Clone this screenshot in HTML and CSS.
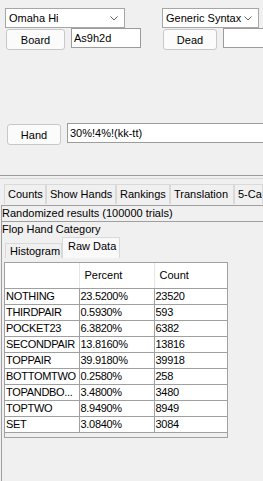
FILE: index.html
```html
<!DOCTYPE html>
<html lang="en">
<head>
    <meta charset="UTF-8">
    <meta name="viewport" content="width=device-width, initial-scale=1.0">
    <title>Odds Oracle</title>
    <link rel="stylesheet" href="styles.css">
</head>
<body>
<div class="frame">
    <div class="rowCombos">
        <div class="combo comboGame">
            <span>Omaha Hi</span>
            <svg class="chev" width="8" height="5" viewBox="0 0 8 5"><path d="M0.5 0.5 L4 4 L7.5 0.5" fill="none" stroke="#606060" stroke-width="1"/></svg>
        </div>
        <div class="combo comboSyntax">
            <span>Generic Syntax</span>
            <svg class="chev" width="8" height="5" viewBox="0 0 8 5"><path d="M0.5 0.5 L4 4 L7.5 0.5" fill="none" stroke="#606060" stroke-width="1"/></svg>
        </div>
    </div>

    <div class="rowButtons">
        <div class="btn btnBoard">Board</div>
        <div class="field fieldBoard">As9h2d</div>
        <div class="btn btnDead">Dead</div>
        <div class="field fieldDead"></div>
    </div>

    <div class="rowHand">
        <div class="btn btnHand">Hand</div>
        <div class="field fieldHand">30%!4%!(kk-tt)</div>
    </div>

    <div class="separator"></div>

    <div class="tabs">
        <div class="tab tabCounts">Counts</div>
        <div class="tab tabShow">Show Hands</div>
        <div class="tab tabRank">Rankings</div>
        <div class="tab tabTrans">Translation</div>
        <div class="tab tabFive">5-Ca</div>
    </div>

    <div class="panel">
        <div class="status">Randomized results (100000 trials)</div>
        <div class="title">Flop Hand Category</div>
        <div class="subtabs">
            <div class="subtab subHisto">Histogram</div>
            <div class="subtab subRaw">Raw Data</div>
        </div>
        <div class="tableBox">
            <table class="rawTable">
                <tr class="head"><th></th><th>Percent</th><th>Count</th></tr>
                <tr><td>NOTHING</td><td>23.5200%</td><td>23520</td></tr>
                <tr><td>THIRDPAIR</td><td>0.5930%</td><td>593</td></tr>
                <tr><td>POCKET23</td><td>6.3820%</td><td>6382</td></tr>
                <tr><td>SECONDPAIR</td><td>13.8160%</td><td>13816</td></tr>
                <tr><td>TOPPAIR</td><td>39.9180%</td><td>39918</td></tr>
                <tr><td>BOTTOMTWO</td><td>0.2580%</td><td>258</td></tr>
                <tr><td>TOPANDBO...</td><td>3.4800%</td><td>3480</td></tr>
                <tr><td>TOPTWO</td><td>8.9490%</td><td>8949</td></tr>
                <tr><td>SET</td><td>3.0840%</td><td>3084</td></tr>
            </table>
        </div>
    </div>
</div>
</body>
</html>
```

FILE: styles.css
```css
*{
    box-sizing: border-box;
}
body{
    margin: 0;
    background-color: #f0f0f0;
    font-family: "Liberation Sans", Arial, sans-serif;
    font-size: 11px;
    color: #000;
}
.frame{
    width: 263px;
    height: 481px;
    overflow: hidden;
}

/* top controls */
.rowCombos{
    display: flex;
    padding-top: 8px;
    height: 28px;
}
.combo{
    display: flex;
    align-items: center;
    justify-content: space-between;
    height: 20px;
    background-color: white;
    border: solid 1px #a6a6a6;
    padding: 0 6px 0 3px;
    white-space: nowrap;
}
.comboGame{
    margin-left: 5px;
    width: 120px;
}
.comboSyntax{
    margin-left: 37px;
    width: 97px;
}
.chev{
    flex: none;
    margin-top: 1px;
}
.rowButtons{
    display: flex;
    align-items: flex-start;
    height: 22px;
}
.btn{
    flex: none;
    display: flex;
    align-items: center;
    justify-content: center;
    height: 21px;
    margin-top: 1px;
    border: solid 1px #c8c8c8;
    border-radius: 3px;
    background-color: #fbfbfb;
}
.field{
    flex: none;
    height: 20px;
    line-height: 18px;
    padding-left: 2px;
    background-color: white;
    border: solid 1px #9c9c9c;
    white-space: nowrap;
}
.btnBoard{
    margin-left: 6px;
    width: 59px;
}
.fieldBoard{
    margin-left: 6px;
    width: 70px;
}
.btnDead{
    margin-left: 22px;
    width: 54px;
}
.fieldDead{
    margin-left: 6px;
    width: 60px;
}
.rowHand{
    display: flex;
    align-items: flex-start;
    margin-top: 73px;
    height: 22px;
}
.btnHand{
    margin-left: 7px;
    width: 54px;
}
.fieldHand{
    margin-left: 6px;
    margin-top: 0;
    width: 220px;
}
.separator{
    margin-top: 30px;
    height: 4px;
    border-top: solid 1px #9a9a9a;
    border-bottom: solid 1px #d6d6d6;
}

/* main tabs */
.tabs{
    display: flex;
    margin-top: 5px;
    padding-left: 4px;
    height: 20px;
    white-space: nowrap;
}
.tab{
    flex: none;
    height: 20px;
    line-height: 18px;
    border: solid 1px #d9d9d9;
    border-bottom: none;
    background-color: #f0f0f0;
    padding-left: 3px;
}
.tabCounts{ width: 42px; }
.tabShow{ width: 70px; }
.tabRank{ width: 54px; }
.tabTrans{ width: 64px; }
.tabFive{ width: 29px; overflow: hidden; }

.panel{
    margin-top: 1px;
    margin-left: 1px;
    height: 300px;
    border-top: solid 1px #a0a0a0;
    border-left: solid 1px #a0a0a0;
}
.status{
    height: 16px;
    line-height: 14px;
    border-bottom: solid 1px #a0a0a0;
    white-space: nowrap;
}
.title{
    height: 15px;
    line-height: 14px;
}
.subtabs{
    display: flex;
    align-items: flex-end;
    height: 21px;
    padding-left: 3px;
}
.subtab{
    flex: none;
    border: solid 1px #d9d9d9;
    border-bottom: none;
    padding-left: 4px;
}
.subHisto{
    width: 57px;
    height: 15px;
    line-height: 15px;
    background-color: #f0f0f0;
}
.subRaw{
    width: 58px;
    height: 21px;
    line-height: 17px;
    padding-left: 5px;
    background-color: #f9f9f9;
}

/* raw data table */
.tableBox{
    margin-top: 4px;
    margin-left: 2px;
    width: 224px;
    height: 176px;
    border: solid 1px #a0a0a0;
    background-color: #f0f0f0;
}
.rawTable{
    border-collapse: collapse;
    border-spacing: 0;
    table-layout: fixed;
    width: 222px;
    background-color: white;
}
.rawTable th{
    height: 25px;
    padding: 0 0 0 5px;
    font-weight: normal;
    text-align: left;
    border-right: solid 1px #e6e6e6;
    border-bottom: solid 1px #a0a0a0;
}
.rawTable td{
    height: 16px;
    line-height: 15px;
    padding: 0 0 0 1px;
    letter-spacing: -0.3px;
    white-space: nowrap;
    overflow: hidden;
    border-right: solid 1px #a0a0a0;
    border-bottom: solid 1px #a0a0a0;
}
.rawTable th:nth-child(1), .rawTable td:nth-child(1){ width: 74px; }
.rawTable th:nth-child(2), .rawTable td:nth-child(2){ width: 75px; }
.rawTable th:nth-child(3), .rawTable td:nth-child(3){ width: 73px; border-right: none; }
```
